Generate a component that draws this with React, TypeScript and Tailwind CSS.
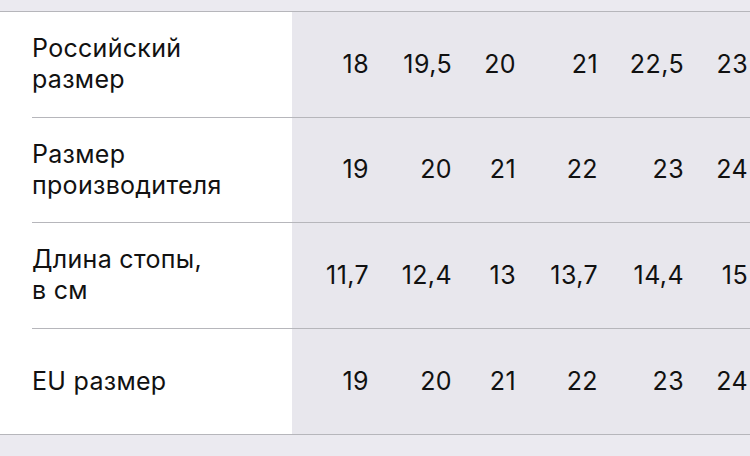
import React from "react";

interface SizeRow {
  label: string[];
  values: string[];
}

const rows: SizeRow[] = [
  { label: ["Российский", "размер"], values: ["18", "19,5", "20", "21", "22,5", "23"] },
  { label: ["Размер", "производителя"], values: ["19", "20", "21", "22", "23", "24"] },
  { label: ["Длина стопы,", "в см"], values: ["11,7", "12,4", "13", "13,7", "14,4", "15"] },
  { label: ["EU размер"], values: ["19", "20", "21", "22", "23", "24"] },
];

// column widths, numbers are right aligned inside
const colWidths = ["w-[77px]", "w-[83px]", "w-[64px]", "w-[82px]", "w-[86px]", "w-[64px]"];

const App: React.FC = () => {
  return (
    <div
      className="w-[750px] h-[456px] overflow-hidden bg-[#ebeaf0] text-[#111111]"
      style={{ fontFamily: "Inter, 'Noto Sans', sans-serif" }}
    >
      <div className="h-[11px]" />
      <div className="border-t border-[#b6b6bb]">
        {rows.map((row, i) => {
          const last = i === rows.length - 1;
          return (
            <div key={i} className="flex h-[105.5px]">
              <div className="w-[292px] shrink-0 bg-white pl-8">
                <div
                  className={`h-full flex flex-col justify-center text-[25px] leading-[31px] tracking-[0.3px] ${
                    last ? "" : "border-b border-[#b6b6bb]"
                  }`}
                >
                  {row.label.map((l) => (
                    <span key={l}>{l}</span>
                  ))}
                </div>
              </div>
              <div
                className={`flex-1 flex items-center bg-[#e8e7ed] text-[25px] tracking-[0.4px] ${
                  last ? "" : "border-b border-[#b6b6bb]"
                }`}
              >
                {row.values.map((v, j) => (
                  <span key={j} className={`${colWidths[j]} shrink-0 text-right`}>
                    {v}
                  </span>
                ))}
              </div>
            </div>
          );
        })}
      </div>
      <div className="border-t border-[#b6b6bb]" />
    </div>
  );
};

export default App;
